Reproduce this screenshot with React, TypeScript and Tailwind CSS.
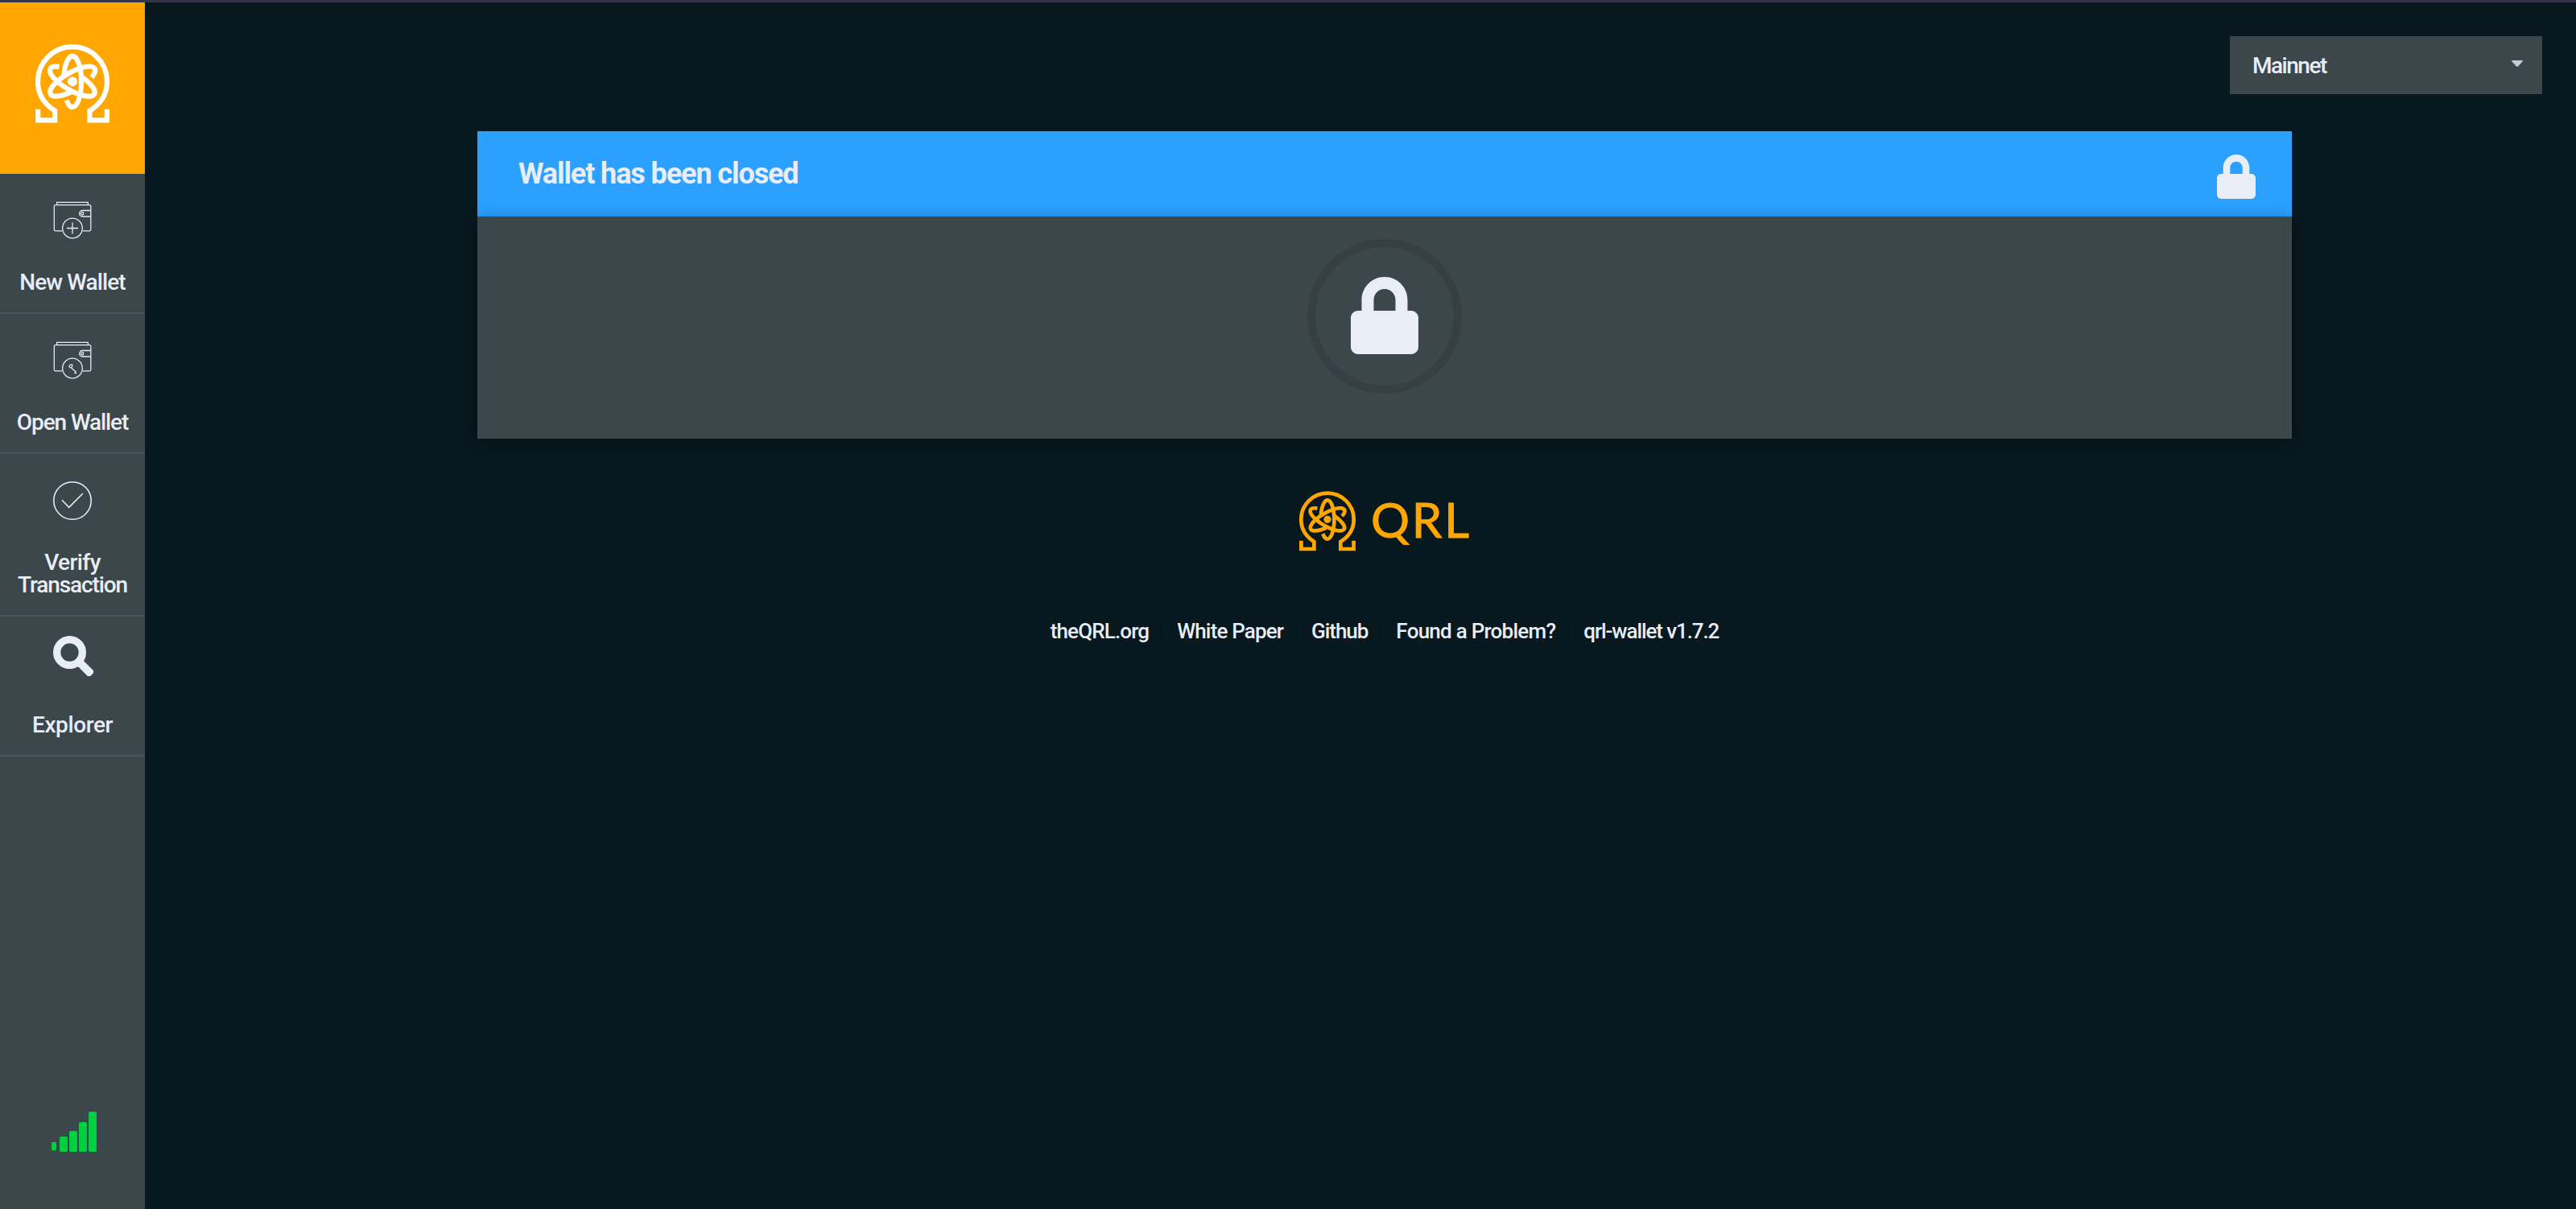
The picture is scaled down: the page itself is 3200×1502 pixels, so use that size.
import type { ReactNode } from 'react';
import { FaLock } from 'react-icons/fa';

function OmegaAtom({ className }: { className: string }) {
  const orbit = 'M247.7 374 A33 95 0 1 0 238 283';
  return (
    <svg viewBox="132 166 276 293" className={className} fill="none" stroke="currentColor" strokeWidth="18.5">
      <path d="M141.5 408 V448.5 H204.5 V413 C160 385 141 345 141 304 A129 129 0 0 1 399 304 C399 345 380 385 334.5 413 V448.5 H398.500 V408" />
      <path d={orbit} />
      <path d={orbit} transform="rotate(120 270 304)" />
      <path d={orbit} transform="rotate(240 270 304)" />
      <circle cx="270" cy="304" r="18" fill="currentColor" stroke="none" />
    </svg>
  );
}

function WalletIcon({ children }: { children: ReactNode }) {
  return (
    <svg viewBox="198 121 144 144" className="mt-[34px] size-12" fill="none" stroke="currentColor" strokeWidth="3.8">
      <path d="M232 231.500 H206 Q202 231.500 202 227 V140 Q202 135 207 135 H333 Q338.500 135 338.500 140 V227 Q338.500 231.500 334 231.500 H308" />
      <path d="M212 134 V125 H328 V134" />
      <path d="M338 155.500 H307 A11.250 11.250 0 0 0 307 178 H338" />
      <circle cx="306.500" cy="167" r="5" />
      <circle cx="270" cy="221.500" r="37" />
      {children}
    </svg>
  );
}

function SearchIcon() {
  return (
    <svg viewBox="198 689.5 150 150" className="mt-6 ml-0.5 size-[50px]">
      <circle cx="259.500" cy="751" r="47.500" fill="none" stroke="currentColor" strokeWidth="28" />
      <rect x="50" y="-15" width="67" height="30" rx="8" fill="currentColor" transform="translate(259.5 751) rotate(45)" />
    </svg>
  );
}

function NavItem({ icon, label, className }: { icon: ReactNode; label: ReactNode; className: string }) {
  return (
    <a className={`flex flex-col items-center border-b-2 border-[#4a545a] ${className}`}>
      <span className="flex h-[121px] items-start justify-center">{icon}</span>
      <span className="text-center text-[28px] leading-7 font-medium whitespace-nowrap">{label}</span>
    </a>
  );
}

function Divider() {
  return <span className="mr-3.5 ml-5 h-6 w-px bg-[#0b1c23]" />;
}

export default function App() {
  return (
    <div className="flex h-[1502px] w-[3200px] flex-col overflow-hidden bg-[#07181e] font-['Roboto',sans-serif] text-[#e8edf6]">
      <div className="h-[3px] shrink-0 bg-[#343347]" />
      <div className="flex min-h-0 flex-1">
        <aside className="flex w-[180px] shrink-0 flex-col bg-[#3c474c]">
          <div className="flex h-[213px] shrink-0 justify-center bg-[#ffa700] pt-[52px] text-white">
            <OmegaAtom className="h-[98px] w-[92px]" />
          </div>
          <NavItem
            className="h-[174px]"
            label={<span className="tracking-[-0.9px]">New Wallet</span>}
            icon={
              <WalletIcon>
                <path d="M249 221.500 H291 M270 200.500 V242.500" />
              </WalletIcon>
            }
          />
          <NavItem
            className="h-[174px]"
            label={<span className="tracking-[-1.1px]">Open Wallet</span>}
            icon={
              <WalletIcon>
                <path d="M266 220 L283 235.500 L282 240 L277 239 M266 220 Q257 219 258 213 Q262 207 269 208 Q271 214 266 220 Z" />
              </WalletIcon>
            }
          />
          <NavItem
            className="h-[202px]"
            label={
              <span className="tracking-[-1.1px]">
                <span className="tracking-[-0.6px]">Verify</span>
                <br />
                Transaction
              </span>
            }
            icon={
              <svg viewBox="198 114 144 144" className="mt-[34px] size-12" fill="none" stroke="currentColor" strokeWidth="4.6">
                <circle cx="270" cy="186" r="69.700" />
                <path d="M231 184 L257 211 L309 159" />
              </svg>
            }
          />
          <NavItem
            className="h-[174px]"
            label={<span className="tracking-[-0.4px]">Explorer</span>}
            icon={<SearchIcon />}
          />
          <svg viewBox="0 0 56 50" className="mt-auto mb-[71px] ml-16 h-[50px] w-14 fill-[#00cf3f]">
            <rect x="0" y="38" width="6" height="10" />
            <rect x="10" y="31" width="10" height="19" rx="2" />
            <rect x="22" y="24" width="10" height="26" rx="2" />
            <rect x="34" y="13" width="10" height="37" rx="2" />
            <rect x="46" y="0" width="10" height="50" rx="2" />
          </svg>
        </aside>

        <main className="flex flex-1 flex-col items-center">
          <div className="flex w-full justify-end pt-[42px] pr-[42px]">
            <div className="flex h-[72px] w-[388px] items-center justify-between bg-[#3c474c] pr-6 pl-7">
              <span className="pt-0.5 text-[28px] leading-7 font-medium tracking-[-1.5px]">Mainnet</span>
              <svg viewBox="0 0 14 8" className="mb-1 h-2 w-3.5 fill-[#c5cbd5]">
                <path d="M0.500 0 H13.500 L14 1 L8 7.500 Q7 8.300 6 7.500 L0 1 Z" />
              </svg>
            </div>
          </div>

          <section className="mt-[46px] ml-[60px] w-[2254px]">
            <header className="flex h-[106px] items-center justify-between bg-[#2ba0ff] pr-[45px] pl-[51px]">
              <h1 className="text-[36px] leading-10 font-bold tracking-[-1.1px]">Wallet has been closed</h1>
              <FaLock className="mt-[7px] h-[55px] w-12" />
            </header>
            <div className="flex h-[276px] justify-center bg-[#3c474c] pt-7 shadow-[0_4px_20px_rgba(0,0,0,0.3)]">
              <div className="flex size-48 items-center justify-center rounded-full border-[10px] border-[#353f44]">
                <FaLock className="mb-0.5 h-24 w-[84px]" />
              </div>
            </div>
          </section>

          <div className="mt-[65px] ml-[60px] flex h-[75px] text-[#ffa700]">
            <OmegaAtom className="h-[75px] w-[70px]" />
            <span className="-mt-0.5 ml-[19px] w-[123px] font-['Lato',sans-serif] text-[60px] leading-[75px] tracking-[2.8px] whitespace-nowrap [-webkit-text-stroke:1px_#ffa700]">
              QRL
            </span>
          </div>

          <nav className="mt-[83px] ml-[60px] flex items-center text-[26px] leading-8 font-medium whitespace-nowrap">
            <a className="tracking-[-0.85px]">theQRL.org</a>
            <Divider />
            <a className="tracking-[-0.85px]">White Paper</a>
            <Divider />
            <a className="tracking-[-1.05px]">Github</a>
            <Divider />
            <a className="tracking-[-0.75px]">Found a Problem?</a>
            <Divider />
            <a className="tracking-[-1.1px]">qrl-wallet v1.7.2</a>
          </nav>
        </main>
      </div>
    </div>
  );
}
